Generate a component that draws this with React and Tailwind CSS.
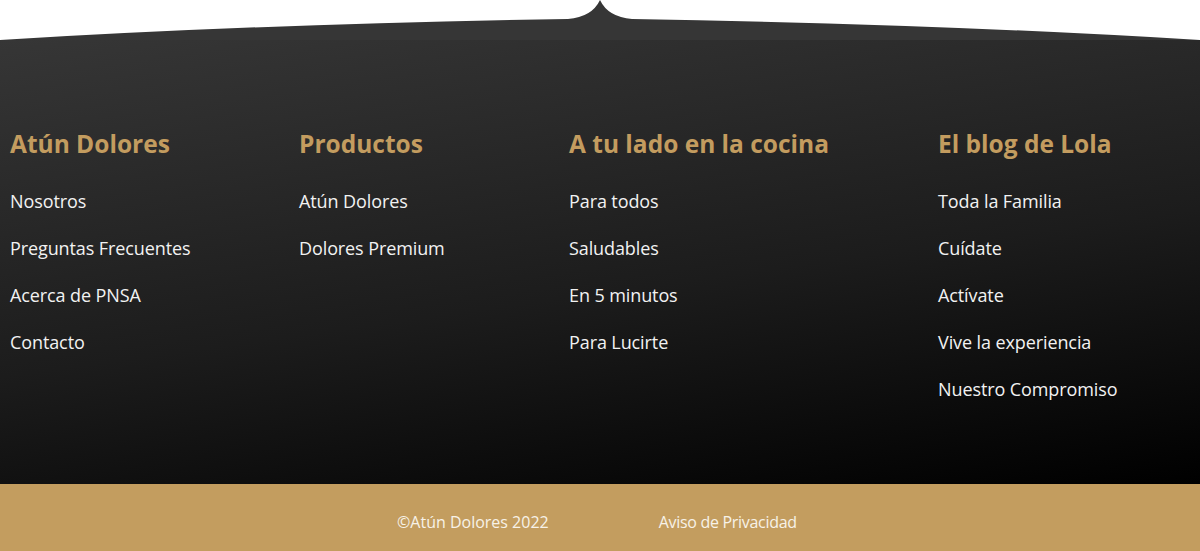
const columns = [
  {
    title: "Atún Dolores",
    links: ["Nosotros", "Preguntas Frecuentes", "Acerca de PNSA", "Contacto"],
  },
  {
    title: "Productos",
    links: ["Atún Dolores", "Dolores Premium"],
  },
  {
    title: "A tu lado en la cocina",
    links: ["Para todos", "Saludables", "En 5 minutos", "Para Lucirte"],
  },
  {
    title: "El blog de Lola",
    links: [
      "Toda la Familia",
      "Cuídate",
      "Actívate",
      "Vive la experiencia",
      "Nuestro Compromiso",
    ],
  },
];

const App = () => {
  return (
    <div
      className="w-full bg-white"
      style={{ fontFamily: '"Open Sans", "Liberation Sans", sans-serif' }}
    >
      <footer>
        {/* top curve */}
        <svg
          className="block w-full h-[40px]"
          viewBox="0 0 1200 40"
          preserveAspectRatio="none"
        >
          <path
            d="M0,40 Q260,24 568,19 Q592,17 600,0 Q608,17 632,19 Q940,24 1200,40 Z"
            fill="#363636"
          />
        </svg>

        <div className="h-[444px] bg-[linear-gradient(172deg,#363636_0%,#1c1c1c_55%,#000000_100%)] pl-[10px] pt-[86px]">
          <div className="grid grid-cols-[289px_270px_369px_1fr]">
            {columns.map((col) => (
              <div key={col.title}>
                <h3 className="text-[24.5px] font-bold leading-[36px] text-[#c39c5f]">
                  {col.title}
                </h3>
                <ul className="mt-[27px] flex flex-col gap-[22px]">
                  {col.links.map((link) => (
                    <li key={link}>
                      <a className="block text-[18px] font-medium leading-[25px] tracking-[-0.1px] text-[#f2f2f2]">
                        {link}
                      </a>
                    </li>
                  ))}
                </ul>
              </div>
            ))}
          </div>
        </div>

        <div className="h-[67px] bg-[#c39d5f] flex items-center pl-[397px] pt-[9px] text-[16px] text-[#f7f2e8]">
          <span>©Atún Dolores 2022</span>
          <a className="ml-[110px] tracking-[-0.3px]">Aviso de Privacidad</a>
        </div>
      </footer>
    </div>
  );
};

export default App;
